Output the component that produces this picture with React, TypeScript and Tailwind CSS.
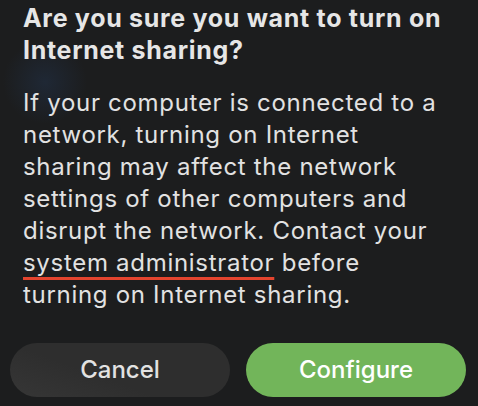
export default function App() {
  return (
    <div
      className="w-[478px] h-[406px] overflow-hidden bg-[#1c1d1e] bg-[radial-gradient(circle_at_45px_82px,#1f2835_0px,#1c1d1e_42px)] text-[#e4e4e4] flex flex-col"
      style={{ fontFamily: 'Inter, "Noto Sans", "Liberation Sans", sans-serif' }}
    >
      <div className="pl-[23px] pt-[2px]">
        <h1 className="text-[25px] leading-[32px] font-bold text-[#e6e6e6] tracking-[0.7px] whitespace-nowrap">
          Are you sure you want to turn on
          <br />
          Internet sharing?
        </h1>
        <p className="mt-[21px] text-[24px] leading-[32px] text-[#e2e2e2] tracking-[0.7px] whitespace-nowrap">
          If your computer is connected to a
          <br />
          network, turning on Internet
          <br />
          sharing may affect the network
          <br />
          settings of other computers and
          <br />
          disrupt the network. Contact your
          <br />
          <span className="underline decoration-[#e4442e] decoration-[2.5px] underline-offset-[6px]">
            system administrator
          </span>{" "}
          before
          <br />
          turning on Internet sharing.
        </p>
      </div>
      <div className="mt-[32px] px-[10px] flex gap-[16px]">
        <button className="w-[220px] h-[54px] rounded-full bg-[#2f2f2f] bg-[linear-gradient(20deg,#363636_0%,#2e2e2e_40%,#2e2e2e_100%)] text-[#e2e2e2] text-[24px] font-medium">
          Cancel
        </button>
        <button className="w-[220px] h-[54px] rounded-full bg-[#72b55a] text-white text-[24px] font-medium">
          Configure
        </button>
      </div>
    </div>
  );
}
